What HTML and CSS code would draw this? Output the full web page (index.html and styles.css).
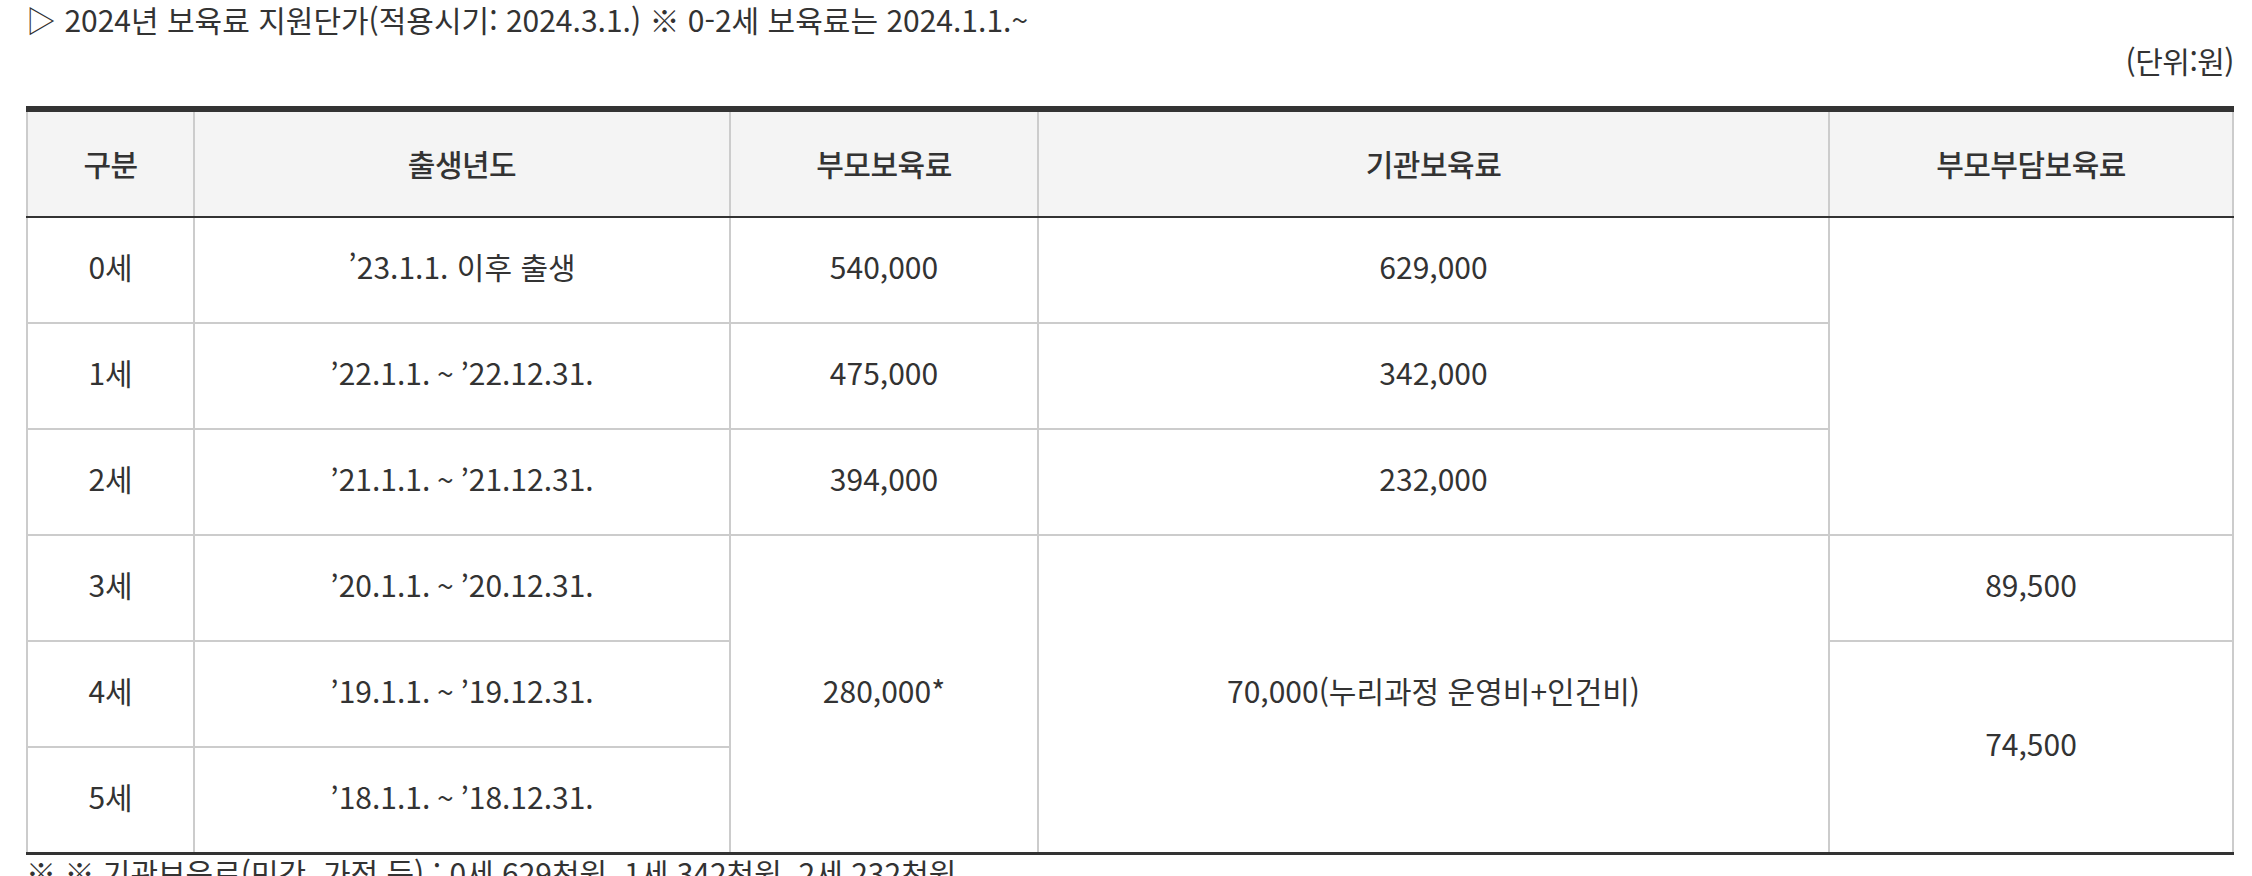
FILE: index.html
```html
<!DOCTYPE html>
<html lang="ko">
<head>
<meta charset="utf-8">
<title>2024년 보육료 지원단가</title>
<link rel="stylesheet" href="styles.css">
</head>
<body>
<div class="wrap">
  <p class="title">▷ 2024년 보육료 지원단가(적용시기: 2024.3.1.) ※ 0-2세 보육료는 2024.1.1.~</p>
  <p class="unit">(단위:원)</p>
  <table class="fee">
    <colgroup>
      <col class="c1"><col class="c2"><col class="c3"><col class="c4"><col class="c5">
    </colgroup>
    <thead>
      <tr><th>구분</th><th>출생년도</th><th>부모보육료</th><th>기관보육료</th><th>부모부담보육료</th></tr>
    </thead>
    <tbody>
      <tr><td>0세</td><td>’23.1.1. 이후 출생</td><td>540,000</td><td>629,000</td><td rowspan="3"></td></tr>
      <tr><td>1세</td><td>’22.1.1. ~ ’22.12.31.</td><td>475,000</td><td>342,000</td></tr>
      <tr><td>2세</td><td>’21.1.1. ~ ’21.12.31.</td><td>394,000</td><td>232,000</td></tr>
      <tr><td>3세</td><td>’20.1.1. ~ ’20.12.31.</td><td rowspan="3">280,000*</td><td rowspan="3">70,000(누리과정 운영비+인건비)</td><td>89,500</td></tr>
      <tr><td>4세</td><td>’19.1.1. ~ ’19.12.31.</td><td rowspan="2">74,500</td></tr>
      <tr><td>5세</td><td>’18.1.1. ~ ’18.12.31.</td></tr>
    </tbody>
  </table>
  <p class="note">※ ※ 기관보육료(민간, 가정 등) : 0세 629천원, 1세 342천원, 2세 232천원</p>
</div>
</body>
</html>
```
FILE: styles.css
```css
html, body {
  margin: 0;
  padding: 0;
  background: #fff;
}
body {
  font-family: "Noto Sans CJK KR", "Noto Sans", sans-serif;
  color: #333;
  font-size: 30px;
}
.wrap {
  padding: 0 18px 0 26px;
}
.title {
  margin: 0;
  padding-top: 2px;
  line-height: 34px;
  letter-spacing: 0;
}
.unit {
  margin: 7px 0 29px;
  line-height: 34px;
  text-align: right;
  letter-spacing: -0.5px;
}
.fee {
  width: 100%;
  border-collapse: collapse;
  border-top: 6px solid #333;
  border-bottom: 3px solid #333;
  table-layout: fixed;
}
.c1 { width: 167px; }
.c2 { width: 536px; }
.c3 { width: 308px; }
.c4 { width: 791px; }
.c5 { width: 404px; }
.fee th, .fee td {
  border: 2px solid #cccccc;
  text-align: center;
  vertical-align: middle;
  line-height: 34px;
}
.fee th {
  background: #f4f4f4;
  font-weight: 500;
  height: 102px;
  padding: 0 0 2px;
  border-bottom: 2px solid #333;
  letter-spacing: -0.5px;
}
.fee thead tr:first-child th {
  border-top: 6px solid #333;
}
.fee td {
  height: 96px;
  padding: 0 0 8px;
  font-weight: 400;
}
.fee tbody tr:last-child td {
  border-bottom: 3px solid #333;
}
.note {
  margin: 0;
  line-height: 34px;
}
```
